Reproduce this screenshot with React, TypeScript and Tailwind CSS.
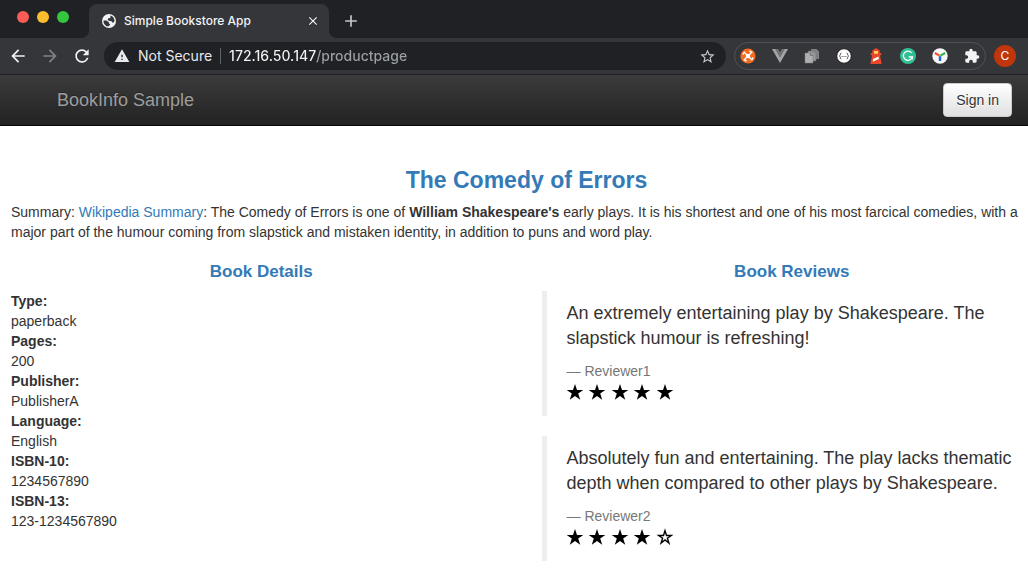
import React from "react";
import {
  MdArrowBack,
  MdArrowForward,
  MdRefresh,
  MdWarning,
  MdStarBorder,
  MdExtension,
  MdClose,
  MdAdd,
} from "react-icons/md";

type Review = { text: string; reviewer: string; stars: number };

const details: [string, string][] = [
  ["Type:", "paperback"],
  ["Pages:", "200"],
  ["Publisher:", "PublisherA"],
  ["Language:", "English"],
  ["ISBN-10:", "1234567890"],
  ["ISBN-13:", "123-1234567890"],
];

const reviews: Review[] = [
  {
    text: "An extremely entertaining play by Shakespeare. The slapstick humour is refreshing!",
    reviewer: "Reviewer1",
    stars: 5,
  },
  {
    text: "Absolutely fun and entertaining. The play lacks thematic depth when compared to other plays by Shakespeare.",
    reviewer: "Reviewer2",
    stars: 4,
  },
];

function GlobeIcon() {
  return (
    <svg viewBox="0 0 14 14" className="size-3.5 shrink-0" aria-hidden="true">
      <circle cx="7" cy="7" r="7" fill="#f1f3f4" />
      <path d="M1.5 6.4 H4.6 L7 8.400 V9.600 L8 10 V11 L6.200 12.500 C3.400 12.100 1.300 9.600 1.500 6.400Z" fill="#35363a" />
      <path
        d="M8.400 1.500 C11 2.200 12.600 4.500 12.500 7.200 L11.600 8.600 H10.200 L9.600 7.300 L6.600 6.800 L5.600 5.600 L6.400 4.300 L8.400 3.900Z"
        fill="#35363a"
      />
    </svg>
  );
}

function OrangeIcon() {
  return (
    <svg viewBox="0 0 16 16" className="size-4" aria-hidden="true">
      <circle cx="8" cy="8" r="7.600" fill="#f26b21" />
      <circle cx="8" cy="8" r="2.300" fill="#fff" />
      <path d="M5 5 L11 11 M11 5 L5 11" stroke="#fff" strokeWidth="1.300" />
      <path
        d="M3 6.500 A5.200 5.200 0 0 1 5 3.800 M9.500 3 A5.200 5.200 0 0 1 12.200 5 M13 9.500 A5.200 5.200 0 0 1 11 12.200 M6.500 13 A5.200 5.200 0 0 1 3.800 11"
        fill="none"
        stroke="#fff"
        strokeWidth="1.500"
      />
    </svg>
  );
}

function VueIcon() {
  return (
    <svg viewBox="0 0 16 16" className="size-4" aria-hidden="true">
      <path d="M0 1 H3.500 L8 9 L12.500 1 H16 L8 15Z" fill="#a3a4a5" />
      <path d="M3.300 1 H6.200 L8 4.200 L9.800 1 H12.700 L8 9.200Z" fill="#717375" />
    </svg>
  );
}

function PagesIcon() {
  return (
    <svg viewBox="0 0 16 16" className="size-4" aria-hidden="true">
      <path d="M7 1 H12.500 L15 3.500 V11 H7Z" fill="#808284" />
      <path d="M4 3 H9.500 L12 5.500 V13 H4Z" fill="#959798" stroke="#66686a" strokeWidth="0.500" />
      <path d="M1 5 H6.500 L9 7.500 V15 H1Z" fill="#aeafb0" stroke="#808284" strokeWidth="0.500" />
      <path d="M6.500 5 V7.500 H9" fill="none" stroke="#66686a" strokeWidth="0.800" />
    </svg>
  );
}

function BracesIcon() {
  return (
    <svg viewBox="0 0 16 16" className="size-4" aria-hidden="true">
      <circle cx="8" cy="8" r="7.200" fill="#fff" stroke="#151618" strokeWidth="0.800" />
      <path
        d="M5.300 5 C3.900 5 4.900 7.500 3.400 8 C4.900 8.500 3.900 11 5.300 11 M10.700 5 C12.100 5 11.100 7.500 12.600 8 C11.100 8.500 12.100 11 10.700 11"
        fill="none"
        stroke="#333"
        strokeWidth="0.900"
      />
      <path d="M5.600 8.500 h1.100 M7.500 8.500 h1.100 M9.400 8.500 h1.100" stroke="#555" strokeWidth="0.900" />
    </svg>
  );
}

function LighthouseIcon() {
  return (
    <svg viewBox="0 0 16 16" className="size-4" aria-hidden="true">
      <path d="M8 0 L11.800 2.500 V5 H13.200 V7.200 H12 L13.600 16 H2.400 L4 7.200 H2.800 V5 H4.200 V2.500Z" fill="#e8472b" />
      <path d="M6 3 H10 V5.800 H6Z" fill="#ffd35c" />
      <path d="M5.200 11 L10.400 8.600 L10.900 11 L4.800 13.800Z" fill="#fff" />
    </svg>
  );
}

function GrammarIcon() {
  return (
    <svg viewBox="0 0 16 16" className="size-4" aria-hidden="true">
      <circle cx="8" cy="8" r="8" fill="#2fc193" />
      <path d="M11.500 4.800 A4.600 4.600 0 1 0 12.400 9 H8.800" fill="none" stroke="#fff" strokeWidth="1.300" />
      <path d="M12.300 8.800 V11.500" stroke="#fff" strokeWidth="1" />
    </svg>
  );
}

function TriColorIcon() {
  return (
    <svg viewBox="0 0 16 16" className="size-4" aria-hidden="true">
      <circle cx="8" cy="8" r="7.700" fill="#f7f7f7" />
      <path d="M2.800 5 L7.600 7.600" stroke="#f0532d" strokeWidth="2.200" />
      <path d="M13.200 5 L8.400 7.600" stroke="#35b44a" strokeWidth="2.200" />
      <path d="M8 8.200 V13" stroke="#1a63e8" strokeWidth="2.400" />
    </svg>
  );
}

function Star({ filled }: { filled: boolean }) {
  return (
    <svg viewBox="1 0 18 18" className="size-[18px] overflow-visible" aria-hidden="true">
      <path
        d={
          filled
            ? "M9 0.900 L11 6.900 H17.300 L12.200 10.600 L14.200 16.700 L9 12.900 L3.800 16.700 L5.800 10.600 L0.700 6.900 H7Z"
            : "M9 2.600 L10.500 7.500 H15.300 L11.400 10.200 L12.900 15 L9 12 L5.100 15 L6.600 10.200 L2.700 7.500 H7.500Z"
        }
        fill={filled ? "#000" : "none"}
        stroke={filled ? "none" : "#000"}
        strokeWidth="1.400"
      />
    </svg>
  );
}

const extensions = [
  { label: "Hub", Icon: OrangeIcon },
  { label: "Vue devtools", Icon: VueIcon },
  { label: "Copy pages", Icon: PagesIcon },
  { label: "JSON viewer", Icon: BracesIcon },
  { label: "Lighthouse", Icon: LighthouseIcon },
  { label: "Grammar", Icon: GrammarIcon },
  { label: "Colors", Icon: TriColorIcon },
];

function BrowserChrome() {
  return (
    <div className="font-['Inter',sans-serif]">
      <div className="flex h-[38px] items-end bg-[#202124]">
        <div className="flex gap-2 self-start pt-[11px] pl-[17px]">
          <button aria-label="Close window" className="size-3 rounded-full bg-[#fc5b57]" />
          <button aria-label="Minimize window" className="size-3 rounded-full bg-[#fdbc2e]" />
          <button aria-label="Zoom window" className="size-3 rounded-full bg-[#34c63f]" />
        </div>
        <div className="ml-3 flex items-end">
          <div className="size-2 bg-[radial-gradient(circle_at_0_0,#202124_8px,#35363a_8px)]" />
          <div className="flex h-[34px] w-60 items-center rounded-t-lg bg-[#35363a] pr-2 pl-[13px]">
            <GlobeIcon />
            <span className="ml-2 flex-1 text-[12px] font-medium whitespace-nowrap text-[#f1f3f4]">
              Simple Bookstore App
            </span>
            <button aria-label="Close tab" className="grid size-4 place-items-center text-[#f1f3f4]">
              <MdClose size={14} />
            </button>
          </div>
          <div className="size-2 bg-[radial-gradient(circle_at_100%_0,#202124_8px,#35363a_8px)]" />
        </div>
        <button aria-label="New tab" className="ml-1 grid h-[34px] w-5 place-items-center text-[#c4c6c9]">
          <MdAdd size={20} />
        </button>
      </div>

      <div className="flex h-[37px] items-center border-b border-[#202124] bg-[#35363a] pr-3 pl-2">
        <button aria-label="Back" className="mr-3 text-[#f1f3f4]">
          <MdArrowBack size={20} />
        </button>
        <button aria-label="Forward" className="mr-3 text-[#828386]">
          <MdArrowForward size={20} />
        </button>
        <button aria-label="Reload" className="mr-3 text-[#f1f3f4]">
          <MdRefresh size={20} />
        </button>
        <div className="flex h-7 flex-1 items-center rounded-full bg-[#202124] pr-2.5 pl-2.5 text-[14px]">
          <MdWarning size={16} className="shrink-0 text-[#e8eaed]" />
          <span className="ml-2 whitespace-nowrap text-[#e8eaed]">Not Secure</span>
          <span className="mx-2 h-4 w-px bg-[#5f6368]" />
          <input
            aria-label="Address"
            defaultValue="172.16.50.147/productpage"
            className="min-w-0 flex-1 bg-[linear-gradient(90deg,#f1f3f4_88px,#9aa0a6_88px)] bg-clip-text font-medium text-transparent outline-none"
          />
          <button aria-label="Bookmark this page" className="text-[#c4c6c9]">
            <MdStarBorder size={17} />
          </button>
        </div>
        <div className="mx-2 flex h-7 items-center gap-4 rounded-full border border-[#505155] px-[5px]">
          {extensions.map(({ label, Icon }) => (
            <button key={label} aria-label={label}>
              <Icon />
            </button>
          ))}
          <button aria-label="Extensions" className="text-[#f1f3f4]">
            <MdExtension size={16} />
          </button>
        </div>
        <button
          aria-label="Profile"
          className="grid size-[22px] place-items-center rounded-full bg-[#bf360c] text-[12px] text-white"
        >
          C
        </button>
      </div>
    </div>
  );
}

export default function App() {
  return (
    <div className="min-h-screen overflow-x-hidden bg-white font-['Liberation_Sans',Arial,sans-serif] text-[14px] leading-5 text-[#333]">
      <BrowserChrome />
      <nav className="flex h-[51px] items-center justify-between border-b border-[#080808] bg-linear-to-b from-[#3c3c3c] to-[#222] pr-4 pl-[57px]">
        <a href="#" className="text-[18px] text-[#9d9d9d] text-shadow-[0_-1px_0_rgba(0,0,0,0.25)]">
          BookInfo Sample
        </a>
        <button className="h-[34px] rounded-[4px] border border-[#ccc] bg-linear-to-b from-white to-[#e0e0e0] px-3 text-[14px] text-[#333] text-shadow-[0_1px_0_#fff]">
          Sign in
        </button>
      </nav>

      <main className="-mr-3.5 pt-[41px] pl-[11px]">
        <h3 className="mb-[9px] text-center text-[23px] leading-[26px] font-bold text-[#337ab7]">
          The Comedy of Errors
        </h3>
        <p className="mb-2.5">
          Summary:{" "}
          <a href="https://en.wikipedia.org/wiki/The_Comedy_of_Errors" className="text-[#337ab7]">
            Wikipedia Summary
          </a>
          : The Comedy of Errors is one of <b>William Shakespeare's</b> early plays. It is his shortest and one of his
          most farcical comedies, with a major part of the humour coming from slapstick and mistaken identity, in
          addition to puns and word play.
        </p>
        <div className="grid grid-cols-2 gap-[30px] pt-2.5">
          <section>
            <h4 className="mb-[9px] text-center text-[17px] leading-5 font-bold text-[#337ab7]">Book Details</h4>
            <dl>
              {details.map(([term, value]) => (
                <React.Fragment key={term}>
                  <dt className="font-bold">{term}</dt>
                  <dd>{value}</dd>
                </React.Fragment>
              ))}
            </dl>
          </section>
          <section>
            <h4 className="mb-[9px] text-center text-[17px] leading-5 font-bold text-[#337ab7]">Book Reviews</h4>
            {reviews.map((r) => (
              <blockquote key={r.reviewer} className="mb-5 border-l-5 border-[#eee] px-5 py-2.5">
                <p className="mb-2.5 text-[18px] leading-[25px]">{r.text}</p>
                <small className="block text-[14px] leading-5 text-[#777]">— {r.reviewer}</small>
                <div
                  role="img"
                  aria-label={`${r.stars} out of 5 stars`}
                  className="flex h-[25px] w-[108px] justify-between pt-0.5"
                >
                  {[1, 2, 3, 4, 5].map((n) => (
                    <Star key={n} filled={n <= r.stars} />
                  ))}
                </div>
              </blockquote>
            ))}
          </section>
        </div>
      </main>
    </div>
  );
}
